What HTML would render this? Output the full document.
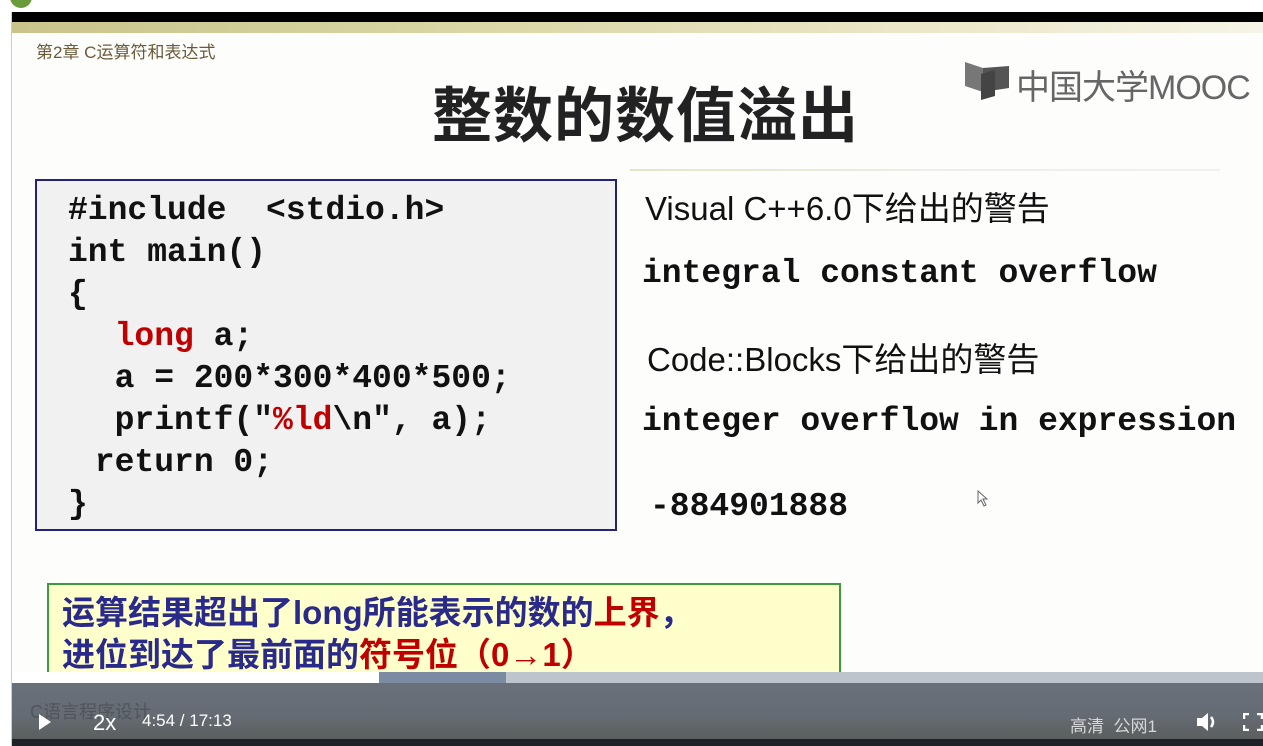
<!DOCTYPE html>
<html><head><meta charset="utf-8"><style>
*{margin:0;padding:0;box-sizing:border-box}
body{width:1263px;height:746px;overflow:hidden;background:#fff;position:relative;font-family:"Liberation Sans","Noto Sans CJK SC",sans-serif}
.a{position:absolute;white-space:pre}
.mono{font-family:"Liberation Mono","Noto Sans CJK SC",monospace;font-weight:bold;font-size:33px;color:#111}
.red{color:#c00000}
</style></head><body>
<div class="a" style="left:10px;top:-14px;width:22px;height:22px;border-radius:50%;background:#6a9a3a"></div>
<div class="a" style="left:11px;top:12px;width:1252px;height:734px;border-left:1px solid #ccc;background:#fdfdfc"></div>
<div class="a" style="left:12px;top:12px;width:1251px;height:10px;background:#000"></div>
<div class="a" style="left:12px;top:22px;width:1251px;height:11px;background:linear-gradient(90deg,#c8c48a,#dcd8a8 40%,#eeead0 80%,#f6f4e6)"></div>
<div class="a" style="left:36px;top:38px;font-size:17px;color:#6a5a3a">第2章 C运算符和表达式</div>
<div class="a" style="left:432px;top:68px;font-size:60px;font-weight:bold;color:#222;letter-spacing:1px">整数的数值溢出</div>
<svg class="a" style="left:963px;top:60px" width="50" height="40" viewBox="0 0 50 40"><path d="M2 2 L20 8 L20 32 L2 26Z" fill="#777"/><path d="M20 8 L46 6 L46 28 L20 32Z" fill="#555"/><path d="M18 14 L32 10 L32 36 L18 40Z" fill="#444"/></svg>
<div class="a" style="left:1016px;top:60px;font-size:34px;color:#666;letter-spacing:-1px">中国大学MOOC</div>
<div class="a" style="left:630px;top:169px;width:590px;height:2px;background:linear-gradient(90deg,#e2e6c8,#eee 60%,#f0f0f0)"></div>
<div class="a" style="left:35px;top:179px;width:582px;height:352px;background:#f1f1f1;border:2px solid #22227a"></div>
<div class="a mono" style="left:68px;top:190px;line-height:42px">#include  &lt;stdio.h&gt;
int main()
{
<span style="padding-left:7px"></span>  <span class="red">long</span> a;
<span style="padding-left:7px"></span>  a = 200*300*400*500;
<span style="padding-left:7px"></span>  printf("<span class="red">%ld</span>\n", a);
<span style="padding-left:7px"></span> return 0;
}</div>
<div class="a" style="left:645px;top:182px;font-size:33px;color:#111">Visual C++6.0下给出的警告</div>
<div class="a mono" style="left:642px;top:255px">integral constant overflow</div>
<div class="a" style="left:647px;top:333px;font-size:33px;color:#111">Code::Blocks下给出的警告</div>
<div class="a mono" style="left:642px;top:403px">integer overflow in expression</div>
<div class="a mono" style="left:650px;top:488px">-884901888</div>
<div class="a" style="left:47px;top:583px;width:794px;height:108px;background:#ffffcc;border:2px solid #3c9a3c"></div>
<div class="a" style="left:62px;top:592px;font-size:33px;line-height:42px;color:#2a2a8a;font-weight:bold">运算结果超出了long所能表示的数的<span class="red">上界</span>，
进位到达了最前面的<span class="red">符号位（0→1）</span></div>
<div class="a" style="left:15px;top:672px;width:364px;height:11px;background:#fff"></div>
<div class="a" style="left:379px;top:672px;width:127px;height:11px;background:#7b8ba2"></div>
<div class="a" style="left:506px;top:672px;width:757px;height:11px;background:#bcc4cc"></div>
<div class="a" style="left:12px;top:683px;width:1251px;height:56px;background:linear-gradient(#6b717a,#656b73 60%,#5a5f5e)"></div>
<div class="a" style="left:12px;top:739px;width:1251px;height:7px;background:#1e2226"></div>
<div class="a" style="left:30px;top:698px;font-size:18px;color:#50555a">C语言程序设计</div>
<svg class="a" style="left:38px;top:713px" width="14" height="18"><path d="M1 1 L13 9 L1 17Z" fill="#fff"/></svg>
<div class="a" style="left:93px;top:710px;font-size:22px;color:#fff">2x</div>
<div class="a" style="left:142px;top:711px;font-size:17px;color:#fff">4:54 / 17:13</div>
<div class="a" style="left:1070px;top:712px;font-size:17px;color:#d6d8da">高清  公网1</div>
<svg class="a" style="left:1195px;top:711px" width="24" height="22"><path d="M2 7 H7 L13 2 V20 L7 15 H2Z" fill="#fff"/><path d="M16 6 Q20 11 16 16" stroke="#fff" stroke-width="2.5" fill="none"/></svg>
<svg class="a" style="left:1243px;top:713px" width="20" height="18"><path d="M1 6 V1 H6 M14 1 H19 V6 M19 12 V17 H14 M6 17 H1 V12" stroke="#fff" stroke-width="2.5" fill="none"/></svg>
<svg class="a" style="left:977px;top:490px" width="12" height="18"><path d="M1 1 L1 13 L4 10 L7 16 L9 15 L6 9 L10 9Z" fill="#fff" stroke="#666"/></svg>
</body></html>
